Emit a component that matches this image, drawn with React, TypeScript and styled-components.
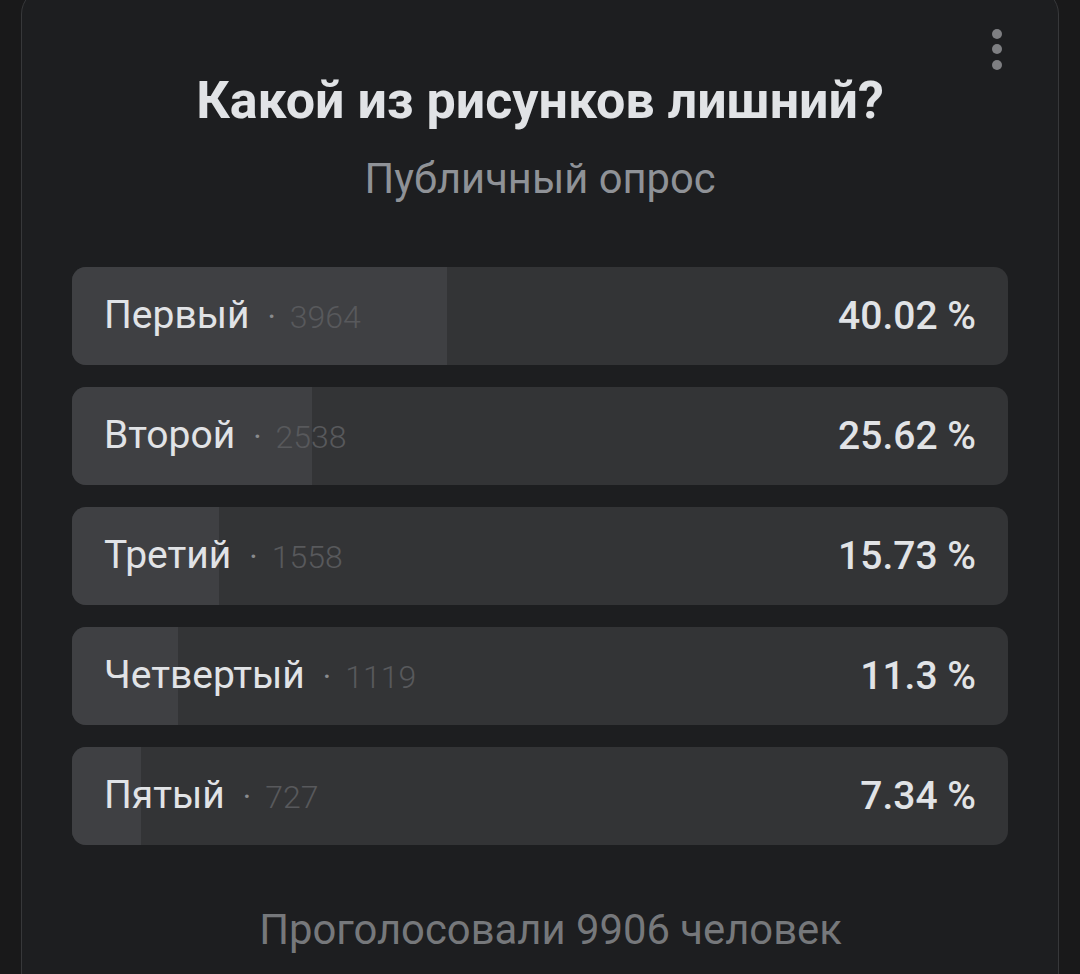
import React from "react";
import styled, { createGlobalStyle } from "styled-components";

const GlobalStyle = createGlobalStyle`
  html, body {
    margin: 0;
    padding: 0;
    background: #19191a;
    font-family: Roboto, "Noto Sans", "Liberation Sans", sans-serif;
    overflow: hidden;
  }
`;

const Page = styled.div`
  height: 974px;
  padding: 0 21px;
  overflow: hidden;
`;

const Card = styled.section`
  position: relative;
  margin-top: -12px;
  background: #1d1e20;
  border: 1px solid #37383a;
  border-radius: 26px;
  padding: 82px 50px 120px;
  display: flex;
  flex-direction: column;
  align-items: stretch;
`;

const MenuButton = styled.button`
  position: absolute;
  top: 35px;
  right: 51px;
  width: 20px;
  height: 50px;
  padding: 0;
  border: 0;
  background: transparent;
  display: flex;
  flex-direction: column;
  align-items: center;
  justify-content: center;
  gap: 5.5px;
`;

const Dot = styled.span`
  width: 10px;
  height: 10px;
  border-radius: 50%;
  background: #7e7f82;
`;

const Title = styled.h1`
  margin: 0;
  text-align: center;
  font-size: 52px;
  line-height: 60px;
  font-weight: 700;
  color: #e1e3e6;
`;

const Subtitle = styled.div`
  margin-top: 24px;
  text-align: center;
  font-size: 41.7px;
  line-height: 48px;
  color: #8f9297;
`;

const Options = styled.div`
  margin-top: 64px;
  display: flex;
  flex-direction: column;
  gap: 22px;
`;

const Option = styled.div`
  position: relative;
  height: 98px;
  border-radius: 14px;
  background: #333436;
  overflow: hidden;
  display: flex;
  align-items: center;
  padding: 0 32px;
`;

const Fill = styled.div`
  position: absolute;
  left: 0;
  top: 0;
  bottom: 0;
  background: #3f4043;
`;

const Label = styled.div`
  position: relative;
  flex: 1;
  display: flex;
  align-items: baseline;
  font-size: 39px;
  line-height: 48px;
  color: #e1e3e6;
  white-space: nowrap;
`;

const Sep = styled.span`
  margin: 0 14px 0 18px;
  font-size: 32px;
  color: #8a8b8e;
`;

const Count = styled.span`
  font-size: 32px;
  font-weight: 300;
  color: #58595c;
`;

const Percent = styled.div`
  position: relative;
  font-size: 39px;
  line-height: 48px;
  font-weight: 500;
  color: #e1e3e6;
  white-space: nowrap;
`;

const Footer = styled.div`
  margin-top: 61px;
  padding-left: 21px;
  text-align: center;
  font-size: 41.8px;
  line-height: 48px;
  color: #76787b;
`;

const options = [
  { label: "Первый", count: 3964, pct: 40.02, shown: "40.02" },
  { label: "Второй", count: 2538, pct: 25.62, shown: "25.62" },
  { label: "Третий", count: 1558, pct: 15.73, shown: "15.73" },
  { label: "Четвертый", count: 1119, pct: 11.3, shown: "11.3" },
  { label: "Пятый", count: 727, pct: 7.34, shown: "7.34" },
];

export default function App() {
  return (
    <Page>
      <GlobalStyle />
      <Card>
        <MenuButton aria-label="Меню">
          <Dot />
          <Dot />
          <Dot />
        </MenuButton>
        <Title>Какой из рисунков лишний?</Title>
        <Subtitle>Публичный опрос</Subtitle>
        <Options>
          {options.map((o) => (
            <Option key={o.label}>
              <Fill style={{ width: `${o.pct}%` }} />
              <Label>
                {o.label}
                <Sep>·</Sep>
                <Count>{o.count}</Count>
              </Label>
              <Percent>{o.shown} %</Percent>
            </Option>
          ))}
        </Options>
        <Footer>Проголосовали 9906 человек</Footer>
      </Card>
    </Page>
  );
}
